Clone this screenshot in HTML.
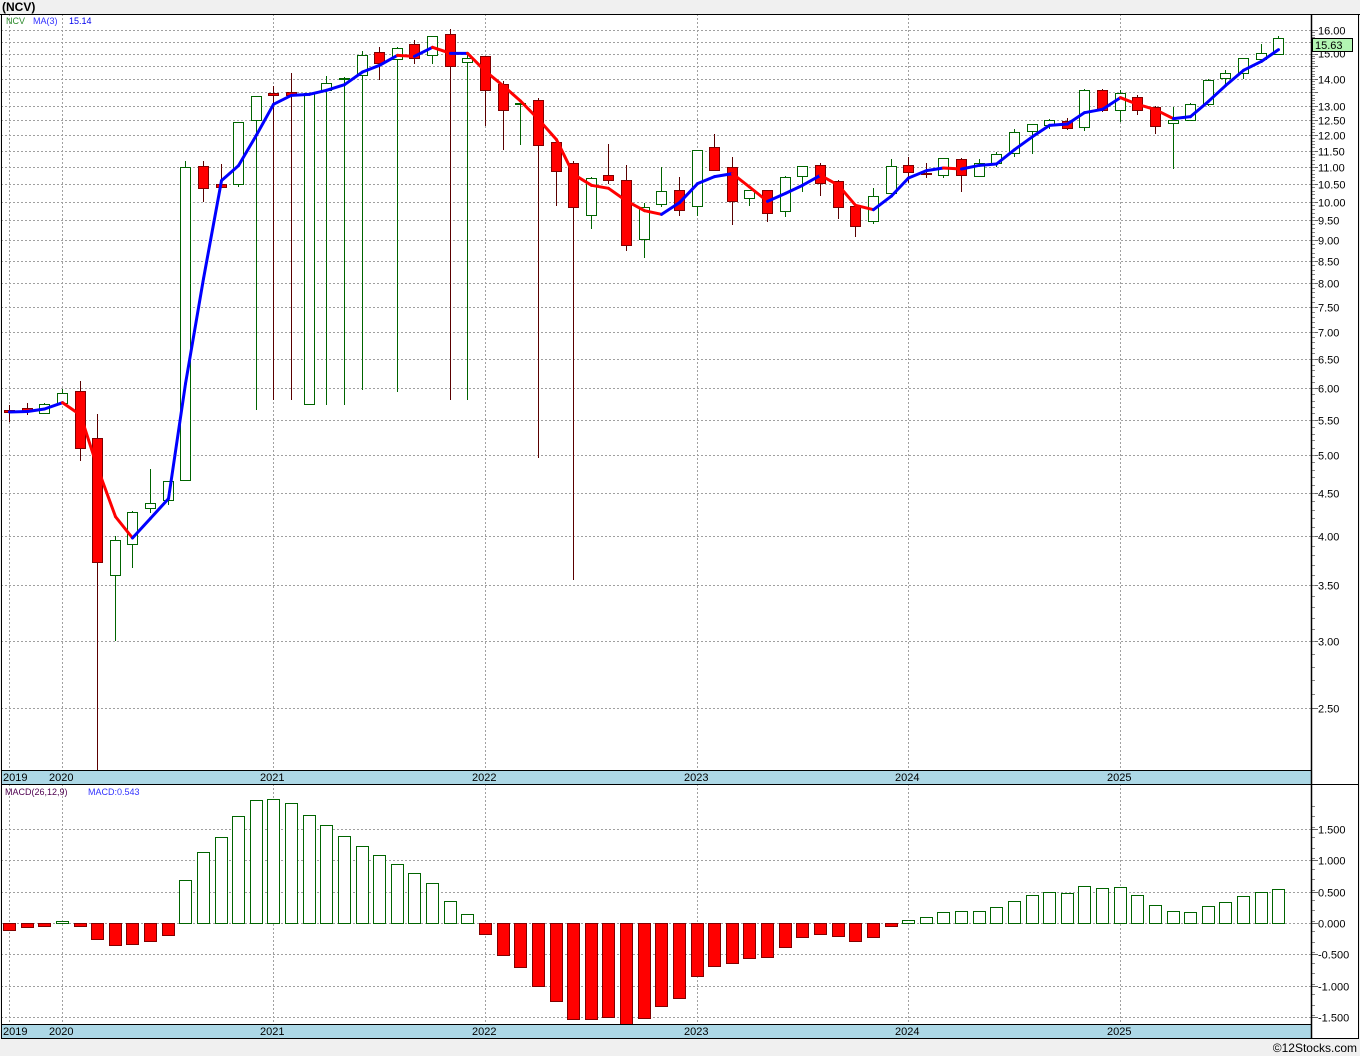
<!DOCTYPE html>
<html><head><meta charset="utf-8"><style>
html,body{margin:0;padding:0;background:#f0f0f0;}
svg{display:block;font-family:"Liberation Sans",sans-serif;}
</style></head><body>
<svg id="s" width="1360" height="1056" xmlns="http://www.w3.org/2000/svg">
<rect x="0" y="0" width="1360" height="1056" fill="#f0f0f0"/>
<rect x="1" y="14" width="1358" height="1024" fill="#fff"/>
<g id="g"></g>
<text x="2" y="11" font-size="12" font-weight="bold" fill="#000">(NCV)</text>
<text x="6" y="24" font-size="9" fill="#2a8a2a">NCV</text>
<text x="33" y="24" font-size="9" fill="#3030ff">MA(3)</text>
<text x="69" y="24" font-size="9" fill="#0000ee">15.14</text>
<text x="5" y="795" font-size="9" fill="#500050">MACD(26,12,9)</text>
<text x="88" y="795" font-size="9" fill="#3333ff">MACD:0.543</text>
<text x="1357" y="1052" font-size="12" fill="#000" text-anchor="end">©12Stocks.com</text>
</svg>
<script>
var NS="http://www.w3.org/2000/svg",G=document.getElementById('g');
function el(t,a,txt){var e=document.createElementNS(NS,t);for(var k in a)e.setAttribute(k,a[k]);if(txt!=null)e.textContent=txt;G.appendChild(e);return e;}
function py(p){return 30+(2.7726-Math.log(p))*365.2;}
// price grid
for(var p=2.5;p<=16.001;p+=0.5){var y=Math.round(py(p))+0.5;
 el('line',{x1:1,x2:1311,y1:y,y2:y,stroke:'#a0a0a0','stroke-dasharray':'2,2'});
 el('line',{x1:1311,x2:1318,y1:y,y2:y,stroke:'#666'});
 if(!(p==15.5||p==14.5||p==13.5||p==15))el('text',{x:1318,y:y+4,'font-size':11,fill:'#000'},p.toFixed(2));
}
el('text',{x:1318,y:py(15)+4,'font-size':11,fill:'#000'},'15.00');
// minor ticks
for(var p=2.6;p<16;p+=0.1){var y=Math.round(py(p))+0.5;el('line',{x1:1311,x2:1315,y1:y,y2:y,stroke:'#888'});}
var yrs=[[9,'2019',3],[62,'2020',49],[273,'2021',260],[485,'2022',472],[697,'2023',684],[908,'2024',895],[1120,'2025',1107]];
yrs.forEach(function(v){var x=v[0]+0.5;el('line',{x1:x,x2:x,y1:14,y2:770,stroke:'#a0a0a0','stroke-dasharray':'2,2'});el('line',{x1:x,x2:x,y1:784,y2:1024,stroke:'#a0a0a0','stroke-dasharray':'2,2'});});
// macd grid
var mz=923,ms=62.7;
[1.5,1,0.5,0,-0.5,-1,-1.5].forEach(function(v){var y=Math.round(mz-v*ms)+0.5;
 el('line',{x1:1,x2:1311,y1:y,y2:y,stroke:'#a0a0a0','stroke-dasharray':'2,2'});
 el('line',{x1:1311,x2:1318,y1:y,y2:y,stroke:'#666'});
 el('text',{x:1318,y:y+4,'font-size':11,fill:'#000'},(v<0?'-':'')+Math.abs(v).toFixed(3));});
for(var v=-1.8;v<=1.9;v+=0.1667){var y=Math.round(mz-v*ms)+0.5;if(y>786&&y<1022)el('line',{x1:1311,x2:1315,y1:y,y2:y,stroke:'#888'});}
// candles [hi,top,bot,lo,up]
var C=[[405,410,412,422,0],[403,408,411,415,0],[403,404,413,413,1],[389,393,403,403,1],[381,391,448,461,0],[414,438,562,770,0],[536,540,575,641,1],[511,512,544,568,1],[469,503,508,513,1],[481,481,500,505,1],[161,167,480,481,1],[161,166,188,202,0],[164,184,187,187,0],[122,122,184,187,1],
[96,96,120,410,1],[86,93,95,400,0],[73,92,95,400,0],[93,93,404,404,1],[76,83,90,405,1],[77,78,79,405,1],[51,55,75,390,1],[47,52,63,80,0],[47,48,59,392,1],[40,44,58,64,0],[36,36,55,64,1],[29,34,66,400,0],[55,58,62,400,1],
[56,56,90,126,0],[81,84,110,150,0],[103,103,104,145,1],[98,100,145,458,0],[142,142,171,206,0],[161,163,207,580,0],[177,178,215,229,1],[144,175,180,184,0],[165,180,245,251,0],[203,207,239,258,1],[167,191,204,207,1],[177,190,210,216,0],[150,150,206,216,1],[134,147,170,170,0],[157,167,201,225,0],
[190,190,198,206,1],[190,190,213,222,0],[176,177,211,217,1],[166,166,176,192,1],[163,165,183,196,0],[180,181,207,219,0],[206,206,226,237,0],[188,196,221,224,1],[159,166,193,193,1],[157,165,172,183,0],[163,173,174,178,0],[158,158,175,178,1],[158,159,175,192,0],[159,163,176,177,1],[152,154,163,167,1],[129,132,153,157,1],[124,124,131,154,1],
[119,120,125,129,1],[118,121,128,130,0],[89,90,127,131,1],[89,90,110,112,0],[90,93,110,122,1],[95,97,110,115,0],[106,107,126,134,0],[107,120,123,169,1],[103,104,120,121,1],[79,80,104,106,1],[70,73,78,85,1],[58,58,73,79,1],[44,53,59,63,1],[36,38,54,54,1]];
function cx(i){return Math.round(9+17.63*i);}
C.forEach(function(c,i){var x=cx(i),up=c[4];var wc=up?'#006400':'#5a0000';
 el('line',{x1:x+0.5,x2:x+0.5,y1:c[0],y2:Math.min(c[3],770),stroke:wc});
 var h=Math.max(c[2]-c[1],1);
 el('rect',{x:x-4.5,y:c[1]+0.5,width:10,height:h,fill:up?'#fff':'#ff0000',stroke:up?'#006400':'#800000'});
});
// MA
var cl=C.map(function(c){return c[4]?c[1]:c[2];}),ma=[];
for(var i=0;i<cl.length;i++){var s=0,n=0;for(var j=Math.max(0,i-2);j<=i;j++){s+=cl[j];n++;}ma.push(s/n);}
for(var i=1;i<ma.length;i++){el('line',{x1:cx(i-1)+0.5,y1:ma[i-1],x2:cx(i)+0.5,y2:ma[i],stroke:ma[i]<=ma[i-1]?'#0000ff':'#ff0000','stroke-width':3,'stroke-linecap':'round'});}
// MACD bars
var M=[930,927,926,921,926,939,945,944,941,935,880,852,837,816,800,799,803,815,825,836,846,855,864,873,883,901,914,934,955,967,986,1001,1019,1019,1017,1024,1018,1006,998,976,966,963,958,957,947,937,934,936,941,937,926,920,917,912,911,911,907,901,895,892,893,886,888,887,895,905,911,912,906,902,896,892,889];
M.forEach(function(v,i){var x=cx(i),pos=v<mz;var y1=Math.min(v,mz),h=Math.max(Math.abs(v-mz),1);
 el('rect',{x:x-5.5,y:y1+0.5,width:12,height:h,fill:pos?'#fff':'#ff0000',stroke:pos?'#006400':'#800000'});});
// bands
[[770,784],[1024,1038]].forEach(function(b){el('rect',{x:1,y:b[0],width:1310,height:b[1]-b[0],fill:'#add8e6'});
 el('line',{x1:1,x2:1311,y1:b[0]+0.5,y2:b[0]+0.5,stroke:'#000'});el('line',{x1:1,x2:1311,y1:b[1]+0.5,y2:b[1]+0.5,stroke:'#000'});
 yrs.forEach(function(v){el('text',{x:v[2],y:b[1]-3,'font-size':11,fill:'#000'},v[1]);});});
// frame
el('line',{x1:0,x2:1360,y1:14.5,y2:14.5,stroke:'#000'});
el('line',{x1:1311.5,x2:1311.5,y1:14,y2:1038,stroke:'#000','stroke-width':1.5});
el('line',{x1:1.5,x2:1.5,y1:14,y2:1038,stroke:'#000'});
el('line',{x1:1358.5,x2:1358.5,y1:14,y2:1038,stroke:'#000'});
el('line',{x1:1311,x2:1359,y1:784.5,y2:784.5,stroke:'#000'});
el('line',{x1:1,x2:1359,y1:1038.5,y2:1038.5,stroke:'#000'});
el('rect',{x:1312.5,y:38.5,width:40,height:13,fill:'#b3f5b3',stroke:'#000'});
el('text',{x:1315,y:49,'font-size':11,fill:'#000'},'15.63');
</script>
</body></html>
